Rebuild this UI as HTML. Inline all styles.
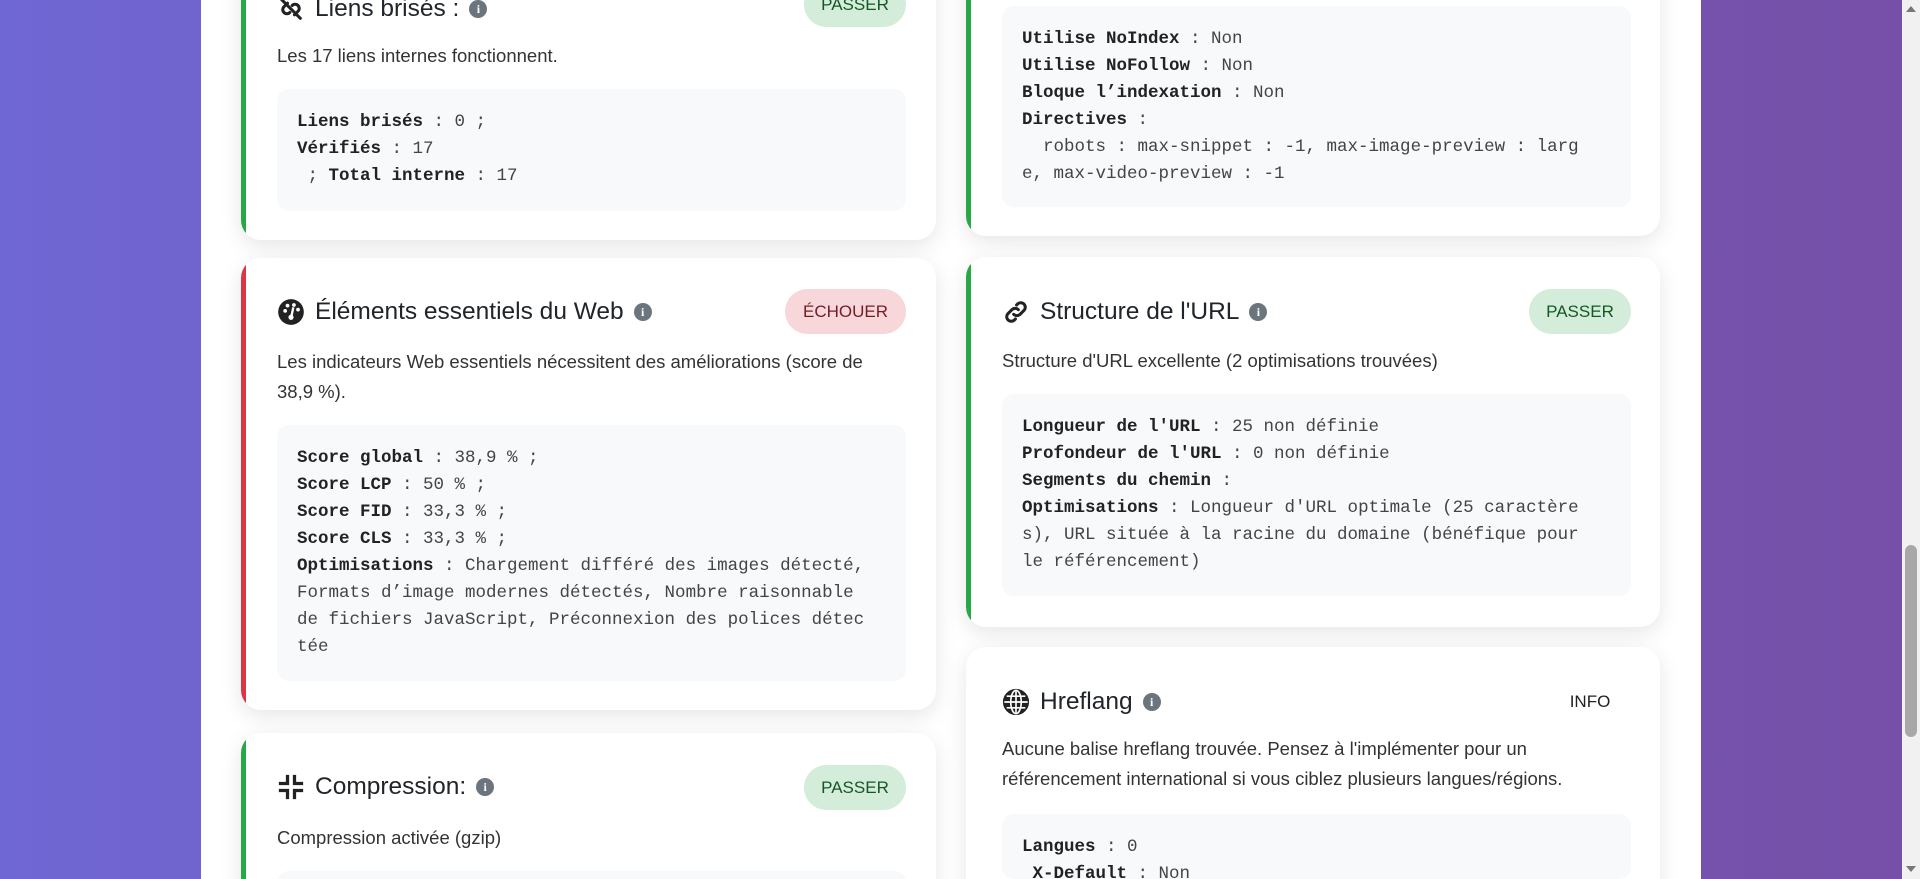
<!DOCTYPE html>
<html><head><meta charset="utf-8">
<style>
*{box-sizing:border-box;margin:0;padding:0}
html,body{width:1920px;height:879px;overflow:hidden}
body{position:relative;background:linear-gradient(90deg,#6f67d4 0%,#7257b8 50%,#7650a8 100%);font-family:"Liberation Sans",sans-serif;color:#212529}
#clip{position:absolute;left:0;top:0;width:1920px;height:879px;overflow:hidden}
.wrap{position:absolute;left:201px;top:0;width:1500px;height:879px;background:#fff}
.card{position:absolute;background:#fff;border-radius:20px;box-shadow:0 6px 22px rgba(0,0,0,0.10);overflow:hidden}
.card .bar{position:absolute;left:0;top:0;bottom:0;width:5px}
.g .bar{background:#28a745}.r .bar{background:#dc3545}
.title{position:absolute;font-size:24.5px;line-height:30px;color:#212529;display:flex;align-items:center;white-space:nowrap}
.title svg{margin-right:10px}
.info{display:inline-block;width:18px;height:18px;border-radius:50%;background:#6c757d;color:#fff;font:bold 12px/18px "Liberation Serif",serif;text-align:center;margin-left:10px}
.badge{position:absolute;height:45px;border-radius:23px;font-size:17px;line-height:45px;text-align:center;font-weight:500}
.pass{background:#d4edda;color:#155724}
.fail{background:#f8d7da;color:#721c24}
.desc{position:absolute;font-size:18.5px;line-height:30px;color:#333;white-space:nowrap}
.code{position:absolute;background:#f8f9fa;border-radius:12px;font-family:"Liberation Mono",monospace;font-size:17.5px;line-height:27px;color:#444;white-space:pre;padding:20px 20px 0 20px;overflow:hidden}
.code b{color:#222}
.sb{position:absolute;left:1902px;top:0;width:18px;height:879px;background:#f1f1f1}
.thumb{position:absolute;left:1905px;top:545px;width:12px;height:192px;background:#a8a8a8;border-radius:6px}
</style></head><body>
<div id="clip">
<div class="wrap"></div>

<div class="card g" style="left:241px;top:-40px;width:695px;height:280px"><div class="bar"></div></div>
<div class="title" style="left:277px;top:-6px"><svg width="28" height="28" viewBox="0 0 24 24" fill="none" stroke="#222" stroke-width="2.6" stroke-linecap="round"><path d="M9 7 L6 10 a3.5 3.5 0 0 0 5 5"/><path d="M15 17 L18 14 a3.5 3.5 0 0 0 -5 -5"/><path d="M4 4 L20 20"/></svg>Liens brisés :<span class="info">i</span></div>
<div class="badge pass" style="left:804px;top:-18px;width:102px">PASSER</div>
<div class="desc" style="left:277px;top:41px">Les 17 liens internes fonctionnent.</div>
<div class="code" style="left:277px;top:89px;width:629px;height:122px"><b>Liens brisés</b> : 0 ;
<b>Vérifiés</b> : 17
 ; <b>Total interne</b> : 17</div>

<div class="card r" style="left:241px;top:258px;width:695px;height:452px"><div class="bar"></div></div>
<div class="title" style="left:277px;top:297px"><svg width="28" height="28" viewBox="0 0 24 24"><circle cx="12" cy="12" r="11" fill="#222"/><circle cx="7" cy="11" r="1.6" fill="#fff"/><circle cx="9" cy="6.5" r="1.6" fill="#fff"/><circle cx="14.5" cy="6" r="1.6" fill="#fff"/><circle cx="18" cy="10" r="1.6" fill="#fff"/><path d="M14 8 L12.5 15" stroke="#fff" stroke-width="2"/><circle cx="12" cy="16.5" r="2.2" fill="#fff"/></svg>Éléments essentiels du Web<span class="info">i</span></div>
<div class="badge fail" style="left:785px;top:289px;width:121px">ÉCHOUER</div>
<div class="desc" style="left:277px;top:347px">Les indicateurs Web essentiels nécessitent des améliorations (score de<br>38,9 %).</div>
<div class="code" style="left:277px;top:425px;width:629px;height:256px"><b>Score global</b> : 38,9 % ;
<b>Score LCP</b> : 50 % ;
<b>Score FID</b> : 33,3 % ;
<b>Score CLS</b> : 33,3 % ;
<b>Optimisations</b> : Chargement différé des images détecté,
Formats d’image modernes détectés, Nombre raisonnable
de fichiers JavaScript, Préconnexion des polices détec
tée</div>

<div class="card g" style="left:241px;top:733px;width:695px;height:200px"><div class="bar"></div></div>
<div class="title" style="left:277px;top:772px"><svg width="28" height="28" viewBox="0 0 24 24" fill="none" stroke="#222" stroke-width="2.8" stroke-linecap="square"><path d="M9 3v6H3M15 3v6h6M9 21v-6H3M15 21v-6h6"/></svg>Compression:<span class="info">i</span></div>
<div class="badge pass" style="left:804px;top:765px;width:102px">PASSER</div>
<div class="desc" style="left:277px;top:823px">Compression activée (gzip)</div>
<div class="code" style="left:277px;top:871px;width:629px;height:60px"></div>

<div class="card g" style="left:966px;top:-40px;width:694px;height:276px"><div class="bar"></div></div>
<div class="code" style="left:1002px;top:6px;width:629px;height:201px"><b>Utilise NoIndex</b> : Non
<b>Utilise NoFollow</b> : Non
<b>Bloque l’indexation</b> : Non
<b>Directives</b> :
  robots : max-snippet : -1, max-image-preview : larg
e, max-video-preview : -1</div>

<div class="card g" style="left:966px;top:257px;width:694px;height:370px"><div class="bar"></div></div>
<div class="title" style="left:1002px;top:297px"><svg width="28" height="28" viewBox="0 0 24 24" fill="none" stroke="#222" stroke-width="2.6" stroke-linecap="round"><path d="M10 14 a4 4 0 0 0 5.5 0 l3.5 -3.5 a3.9 3.9 0 0 0 -5.5 -5.5 l-1 1"/><path d="M14 10 a4 4 0 0 0 -5.5 0 l-3.5 3.5 a3.9 3.9 0 0 0 5.5 5.5 l1 -1"/></svg>Structure de l'URL<span class="info">i</span></div>
<div class="badge pass" style="left:1529px;top:289px;width:102px">PASSER</div>
<div class="desc" style="left:1002px;top:346px">Structure d'URL excellente (2 optimisations trouvées)</div>
<div class="code" style="left:1002px;top:394px;width:629px;height:202px"><b>Longueur de l'URL</b> : 25 non définie
<b>Profondeur de l'URL</b> : 0 non définie
<b>Segments du chemin</b> :
<b>Optimisations</b> : Longueur d'URL optimale (25 caractère
s), URL située à la racine du domaine (bénéfique pour
le référencement)</div>

<div class="card" style="left:966px;top:647px;width:694px;height:280px"></div>
<div class="title" style="left:1002px;top:687px"><svg width="28" height="28" viewBox="0 0 24 24" fill="none" stroke="#222" stroke-width="2.4"><circle cx="12" cy="12" r="10" fill="#222"/><path d="M2 12h20M12 2v20M4 7h16M4 17h16" stroke="#fff" stroke-width="1.4"/><ellipse cx="12" cy="12" rx="4.5" ry="10" stroke="#fff" stroke-width="1.4"/></svg>Hreflang<span class="info">i</span></div>
<div class="badge" style="left:1560px;top:679px;width:60px;color:#222">INFO</div>
<div class="desc" style="left:1002px;top:734px">Aucune balise hreflang trouvée. Pensez à l'implémenter pour un<br>référencement international si vous ciblez plusieurs langues/régions.</div>
<div class="code" style="left:1002px;top:814px;width:629px;height:65px"><b>Langues</b> : 0
 <b>X-Default</b> : Non</div>

<div class="sb"></div>
<div class="thumb"></div>
<div style="position:absolute;left:1906px;top:6px;width:0;height:0;border-left:5px solid transparent;border-right:5px solid transparent;border-bottom:6px solid #777"></div>
<div style="position:absolute;left:1906px;top:866px;width:0;height:0;border-left:5px solid transparent;border-right:5px solid transparent;border-top:6px solid #777"></div>
</div>
</body></html>
